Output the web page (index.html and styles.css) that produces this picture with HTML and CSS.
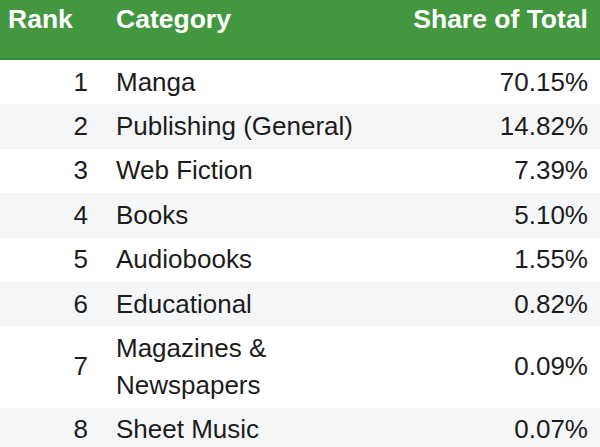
FILE: index.html
```html
<!DOCTYPE html>
<html lang="en">
<head>
<meta charset="utf-8">
<title>Share of Total</title>
<link rel="stylesheet" href="styles.css">
</head>
<body>
<table class="share-table">
  <thead>
    <tr>
      <th class="col-rank">Rank</th>
      <th class="col-cat">Category</th>
      <th class="col-share">Share of Total</th>
    </tr>
  </thead>
  <tbody>
    <tr><td class="col-rank">1</td><td class="col-cat">Manga</td><td class="col-share">70.15%</td></tr>
    <tr><td class="col-rank">2</td><td class="col-cat">Publishing (General)</td><td class="col-share">14.82%</td></tr>
    <tr><td class="col-rank">3</td><td class="col-cat">Web Fiction</td><td class="col-share">7.39%</td></tr>
    <tr><td class="col-rank">4</td><td class="col-cat">Books</td><td class="col-share">5.10%</td></tr>
    <tr><td class="col-rank">5</td><td class="col-cat">Audiobooks</td><td class="col-share">1.55%</td></tr>
    <tr><td class="col-rank">6</td><td class="col-cat">Educational</td><td class="col-share">0.82%</td></tr>
    <tr><td class="col-rank">7</td><td class="col-cat">Magazines &amp;<br>Newspapers</td><td class="col-share">0.09%</td></tr>
    <tr><td class="col-rank">8</td><td class="col-cat">Sheet Music</td><td class="col-share">0.07%</td></tr>
  </tbody>
</table>
</body>
</html>
```

FILE: styles.css
```css
html, body {
  margin: 0;
  padding: 0;
  background: #ffffff;
}

body {
  font-family: "Liberation Sans", Arial, Helvetica, sans-serif;
  color: #1c1c1c;
  overflow: hidden;
}

.share-table {
  width: 600px;
  border-collapse: collapse;
  border-spacing: 0;
}

.share-table th {
  background: #43973f;
  color: #ffffff;
  font-weight: bold;
  font-size: 26.5px;
  line-height: 37px;
  padding-top: 0.5px;
  padding-bottom: 20.5px;
  border-bottom: 2px solid #3a8036;
  vertical-align: top;
}

.share-table td {
  font-size: 26px;
  line-height: 37px;
  padding-top: 3.7px;
  padding-bottom: 3.7px;
  vertical-align: middle;
}

.share-table tbody tr:nth-child(even) td {
  background: #f5f6f8;
}

.col-rank {
  width: 80px;
  padding-left: 8px;
  padding-right: 12px;
}

th.col-rank {
  text-align: left;
}

td.col-rank {
  text-align: right;
}

.col-cat {
  text-align: left;
  padding-left: 16px;
}

.col-share {
  text-align: right;
  padding-right: 12px;
}
```
